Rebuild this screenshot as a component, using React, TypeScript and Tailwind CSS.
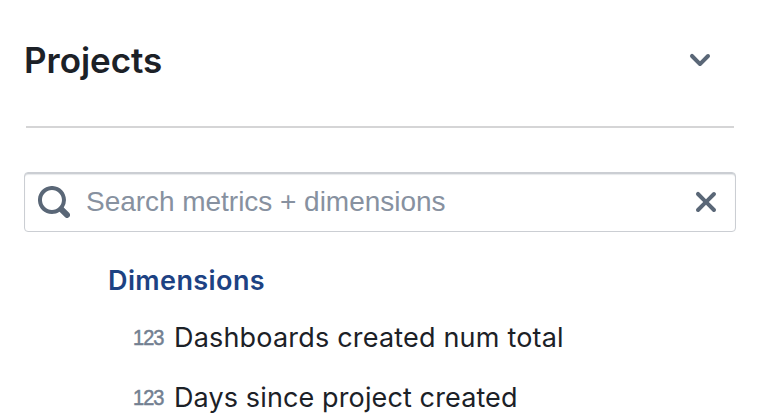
const dimensions = [
  { name: "Dashboards created num total", tracking: "tracking-[0.19px]" },
  { name: "Days since project created", tracking: "tracking-[0.12px]" },
];

function Chevron() {
  return (
    <svg className="h-[32px] w-[32px]" viewBox="0 0 16 16" fill="#5a6777">
      <path d="M12 5c-.28 0-.53.11-.71.29L8 8.590l-3.290-3.300a1.003 1.003 0 00-1.420 1.420l4 4c.18.18.43.29.71.29s.53-.11.71-.29l4-4A1.003 1.003 0 0012 5z" />
    </svg>
  );
}

function Search() {
  return (
    <svg className="h-[32px] w-[32px] shrink-0" viewBox="0 0 16 16" fill="#5a6777">
      <path d="M15.550 13.430l-2.670-2.680a6.940 6.940 0 001.110-3.760c0-3.870-3.130-7-7-7s-7 3.130-7 7 3.130 7 7 7c1.390 0 2.680-.42 3.760-1.110l2.680 2.670a1.498 1.498 0 102.120-2.120zm-8.560-1.440c-2.760 0-5-2.240-5-5s2.240-5 5-5 5 2.240 5 5-2.240 5-5 5z" />
    </svg>
  );
}

function Clear() {
  return (
    <svg className="h-[32px] w-[32px]" viewBox="0 0 16 16" fill="#5a6777">
      <path d="M9.410 8l3.290-3.290c.19-.18.3-.43.3-.71a1.003 1.003 0 00-1.710-.71L8 6.590l-3.290-3.300a1.003 1.003 0 00-1.420 1.420L6.590 8 3.300 11.290c-.19.18-.3.43-.3.71a1.003 1.003 0 001.710.71L8 9.410l3.290 3.290c.18.19.43.3.71.3a1.003 1.003 0 00.71-1.710L9.410 8z" />
    </svg>
  );
}

export default function App() {
  return (
    <main className="h-[420px] w-full overflow-hidden bg-white pl-6 pr-[34px] pt-9 font-['Inter',sans-serif] text-[#1c2127]">
      <header className="flex h-12 items-center justify-between pr-5">
        <h1 className="text-[35px] font-semibold leading-[48px] tracking-[-0.03px]">Projects</h1>
        <button aria-label="Collapse projects"><Chevron /></button>
      </header>
      <hr className="ml-0.5 mr-0.5 mt-[42px] border-0 border-t-2 border-[#d5d5d6]" />
      <div className="mt-[44px] flex h-[60px] items-center rounded-[4px] border border-[#cbced3] px-[13px] shadow-[inset_0_1px_0_#cbced3,inset_0_2px_1px_#e7e9eb]">
        <Search />
        <span className="ml-4 flex-1 whitespace-nowrap font-['Liberation_Sans',sans-serif] text-[28px] leading-8 tracking-[-0.03px] text-[#8791a0]">
          Search metrics + dimensions
        </span>
        <button aria-label="Clear search"><Clear /></button>
      </div>
      <h2 className="ml-[84px] mt-[33px] text-[27px] font-semibold leading-8 tracking-[0.4px] text-[#1d4283]">Dimensions</h2>
      <ul className="ml-[109px] mt-[10px]">
        {dimensions.map(({ name, tracking }) => (
          <li key={name} className="flex h-[60px] items-center whitespace-nowrap">
            <span className="w-[41px] shrink-0 origin-left scale-x-[0.91] pt-px font-['Liberation_Sans',sans-serif] text-[22px] leading-8 tracking-[-1.1px] text-[#738091] [-webkit-text-stroke:0.5px_#738091]">123</span>
            <span className={`pt-0.5 text-[27px] leading-8 ${tracking}`}>{name}</span>
          </li>
        ))}
      </ul>
    </main>
  );
}
